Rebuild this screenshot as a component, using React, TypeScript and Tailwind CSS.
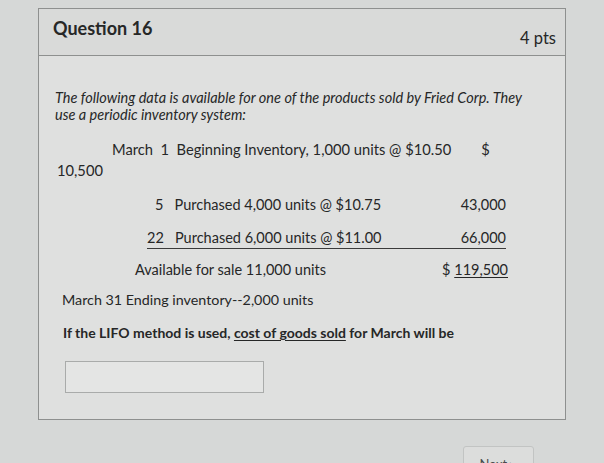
export default function App() {
  return (
    <div className="h-[463px] w-[604px] overflow-hidden bg-[#d6d8d7] font-['Lato',sans-serif] text-[#262727]">
      <div className="h-[8px]" />
      {/* QUESTION CARD */}
      <div className="mx-[38px] h-[412px] border border-[#8e908f] bg-[#dfe0df]">
        <div className="flex h-[47px] justify-between border-b border-[#8e908f] bg-[#d9dad9] pl-[14px] pr-[9px]">
          <h2 className="pt-[8px] text-[18px] font-bold leading-[22px]">Question 16</h2>
          <span className="pt-[18px] text-[16.5px] leading-[22px]">4 pts</span>
        </div>

        <div className="pl-[16px] pr-[20px] pt-[33px] text-[14.7px]">
          <p className="text-[14.5px] italic leading-[17px]">
            The following data is available for one of the products sold by Fried Corp. They
            <br />
            use a periodic inventory system:
          </p>

          <div className="mt-[16px] flex leading-[21px]">
            <span className="pl-[57px]">March&nbsp;&nbsp;1&nbsp;&nbsp;Beginning Inventory, 1,000 units @ $10.50</span>
            <span className="pl-[30px]">$</span>
          </div>
          <div className="pl-[2px] leading-[21px]">10,500</div>

          {/* PURCHASES */}
          <div className="mt-[13px] flex w-[451px] justify-between pl-[100px] text-[14.5px] leading-[21px]">
            <span>5&nbsp;&nbsp;&nbsp;Purchased 4,000 units @ $10.75</span>
            <span>43,000</span>
          </div>
          <div className="ml-[92px] mt-[12px] flex h-[22px] w-[359px] justify-between border-b border-[#3a3a3a] text-[14.5px] leading-[21px]">
            <span>22&nbsp;&nbsp;&nbsp;Purchased 6,000 units @ $11.00</span>
            <span>66,000</span>
          </div>
          <div className="mt-[10px] flex w-[453px] justify-between pl-[80px] text-[14.5px] leading-[21px]">
            <span>Available for sale 11,000 units</span>
            <span>
              $ <span className="underline underline-offset-2">119,500</span>
            </span>
          </div>

          <div className="mt-[9px] pl-[7px] text-[14.3px] leading-[21px]">March 31 Ending inventory--2,000 units</div>
          <div className="mt-[12px] pl-[8px] text-[14px] font-bold leading-[21px]">
            If the LIFO method is used, <span className="underline underline-offset-2">cost of goods sold</span> for March will be
          </div>

          <input
            type="text"
            className="ml-[10px] mt-[18px] h-[32px] w-[199px] border border-[#a9abaa] bg-[#e4e5e4] outline-none"
          />
        </div>
      </div>

      <div className="flex justify-end pr-[70px] pt-[26px]">
        <button className="h-[30px] w-[71px] rounded-[3px] border border-[#c2c4c3] bg-[#dcdddc] pt-[5px] text-[13px] leading-[16px] text-[#4a4b4b]">
          Next ▸
        </button>
      </div>
    </div>
  )
}
